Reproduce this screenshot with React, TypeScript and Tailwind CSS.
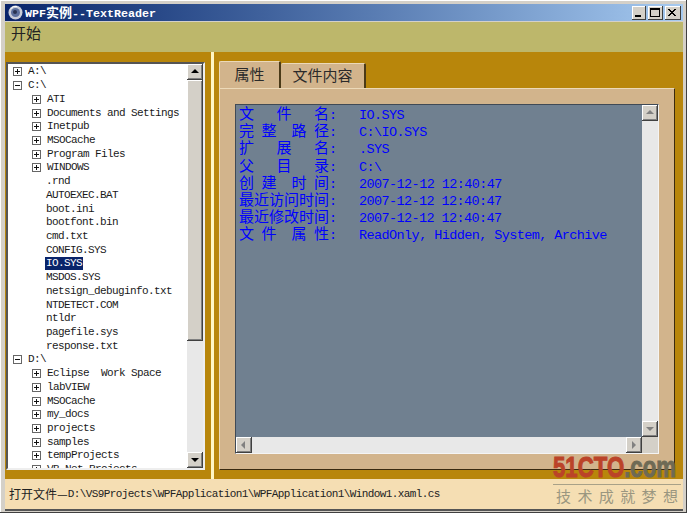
import React from "react";

const CJK = /([\u4e00-\u9fff—]+)/;

function T({ text, cjk, latin }: { text: string; cjk: string; latin: string }) {
  return (
    <>
      {text.split(CJK).map((part, i) =>
        CJK.test(part) ? (
          <span key={i} className={cjk}>
            {part}
          </span>
        ) : (
          <span key={i} className={latin}>
            {part}
          </span>
        ),
      )}
    </>
  );
}

const mono = "font-['Liberation_Mono','DejaVu_Sans_Mono',monospace]";
const cn = "font-['Noto_Sans_CJK_SC',sans-serif]";

function Expander({ open }: { open?: boolean }) {
  return (
    <svg width="9" height="9" viewBox="0 0 9 9" className="shrink-0" shapeRendering="crispEdges">
      <rect x="0.5" y="0.5" width="8" height="8" fill="#fff" stroke="#666" />
      <path d={open ? "M2 4.5H7" : "M2 4.5H7M4.5 2V7"} stroke="#111" fill="none" />
    </svg>
  );
}

type Row = { label: string; level: 0 | 1 | 2; kind?: "open" | "closed"; selected?: boolean };

const rows: Row[] = [
  { label: "A:\\", level: 0, kind: "closed" },
  { label: "C:\\", level: 0, kind: "open" },
  { label: "ATI", level: 1, kind: "closed" },
  { label: "Documents and Settings", level: 1, kind: "closed" },
  { label: "Inetpub", level: 1, kind: "closed" },
  { label: "MSOCache", level: 1, kind: "closed" },
  { label: "Program Files", level: 1, kind: "closed" },
  { label: "WINDOWS", level: 1, kind: "closed" },
  { label: ".rnd", level: 2 },
  { label: "AUTOEXEC.BAT", level: 2 },
  { label: "boot.ini", level: 2 },
  { label: "bootfont.bin", level: 2 },
  { label: "cmd.txt", level: 2 },
  { label: "CONFIG.SYS", level: 2 },
  { label: "IO.SYS", level: 2, selected: true },
  { label: "MSDOS.SYS", level: 2 },
  { label: "netsign_debuginfo.txt", level: 2 },
  { label: "NTDETECT.COM", level: 2 },
  { label: "ntldr", level: 2 },
  { label: "pagefile.sys", level: 2 },
  { label: "response.txt", level: 2 },
  { label: "D:\\", level: 0, kind: "open" },
  { label: "Eclipse  Work Space", level: 1, kind: "closed" },
  { label: "labVIEW", level: 1, kind: "closed" },
  { label: "MSOCache", level: 1, kind: "closed" },
  { label: "my_docs", level: 1, kind: "closed" },
  { label: "projects", level: 1, kind: "closed" },
  { label: "samples", level: 1, kind: "closed" },
  { label: "tempProjects", level: 1, kind: "closed" },
  { label: "VB.Net Projects", level: 1, kind: "closed" },
];

const props = [
  "文   件   名:   IO.SYS",
  "完 整  路 径:   C:\\IO.SYS",
  "扩   展   名:   .SYS",
  "父   目   录:   C:\\",
  "创 建  时 间:   2007-12-12 12:40:47",
  "最近访问时间:   2007-12-12 12:40:47",
  "最近修改时间:   2007-12-12 12:40:47",
  "文 件  属 性:   ReadOnly, Hidden, System, Archive",
];

function Arrow({ dir, color }: { dir: "up" | "down" | "left" | "right"; color: string }) {
  const d = {
    up: "M4 1L8 5H0Z",
    down: "M0 2H8L4 6Z",
    left: "M5 0V8L1 4Z",
    right: "M2 0L6 4L2 8Z",
  }[dir];
  return (
    <svg width="8" height="8" viewBox="0 0 8 8">
      <path d={d} fill={color} />
    </svg>
  );
}

function ScrollBtn({ dir, color }: { dir: "up" | "down" | "left" | "right"; color: string }) {
  return (
    <div className="flex items-center justify-center w-4 h-4 shrink-0 bg-[#d4d0c8] shadow-[inset_-1px_-1px_0_#404040,inset_1px_1px_0_#ffffff,inset_-2px_-2px_0_#808080]">
      <Arrow dir={dir} color={color} />
    </div>
  );
}

function TreeRow({ row }: { row: Row }) {
  const box = row.level === 0 ? "pl-[5px] w-[19px]" : "pl-[24px] w-[38px]";
  return (
    <div className="flex items-center h-[13.73px] whitespace-pre shrink-0">
      {row.kind ? (
        <div className={`${box} shrink-0 flex`}>
          <Expander open={row.kind === "open"} />
        </div>
      ) : (
        <div className="w-[37px] shrink-0" />
      )}
      <span
        className={`${mono} text-[11px] tracking-[-0.6px] leading-[13px] px-px ${
          row.selected ? "bg-[#0a246a] text-white" : "text-[#1a1a1a]"
        }`}
      >
        {row.label}
      </span>
    </div>
  );
}

export default function App() {
  return (
    <div className="relative w-[687px] h-[513px] overflow-hidden flex flex-col bg-[#d4d0c8] pt-1 pl-[5px] pr-[4px] pb-[2px] shadow-[inset_-1px_-1px_0_#404040,inset_1px_1px_0_#ffffff]">
      {/* Title bar */}
      <div className="h-[17px] shrink-0 flex items-center bg-gradient-to-r from-[#0a246a] to-[#a6caf0] pl-[3px] pr-[2px]">
        <svg width="15" height="15" viewBox="0 0 15 15" className="shrink-0">
          <circle cx="7.5" cy="7.5" r="7" fill="#c8ccd8" />
          <circle cx="7.5" cy="7.5" r="4.5" fill="#5c6f9c" />
          <circle cx="7" cy="7" r="2" fill="#2a3350" />
          <path d="M2.5 4A6 6 0 0 1 9 1.5" stroke="#fff" fill="none" />
        </svg>
        <div className="ml-[2px] text-white font-bold whitespace-pre leading-[17px]">
          <T text="WPF实例--TextReader" cjk={`${cn} text-[13px]`} latin={`${mono} text-[11.67px]`} />
        </div>
        <div className="ml-auto flex items-center">
          <WinBtn width="w-[14px]">
            <path d="M3 9H9V11H3Z" fill="#000" />
          </WinBtn>
          <div className="w-[2px]" />
          <WinBtn width="w-[15px]">
            <path d="M2.5 2.5H11.5V10.5H2.5ZM2.5 3.5H11.5" stroke="#000" fill="none" shapeRendering="crispEdges" />
          </WinBtn>
          <div className="w-[2px]" />
          <WinBtn width="w-4">
            <path d="M3 3L10 10M4 3L11 10M10 3L3 10M11 3L4 10" stroke="#000" fill="none" />
          </WinBtn>
        </div>
      </div>

      {/* Menu */}
      <div className="mt-px h-[30px] shrink-0 bg-[#bdb76b] flex items-start pl-[6px]">
        <span className={`${cn} text-[15px] leading-[22px] text-[#222]`}>开始</span>
      </div>

      {/* Main */}
      <div className="flex-1 min-h-0 flex bg-[#b8860b]">
        {/* Left pane */}
        <div className="w-[206px] shrink-0 pt-[10px] pb-[9px] pl-px pr-[6px] flex">
          <div className="flex-1 min-w-0 flex border-2 border-t-[#555555] border-l-[#555555] border-r-[#eeeeee] border-b-[#eeeeee] bg-white">
            <div className="flex-1 min-w-0 overflow-hidden flex flex-col pt-px">
              {rows.map((r, i) => (
                <TreeRow key={i} row={r} />
              ))}
            </div>
            <div className="w-4 shrink-0 flex flex-col bg-[#e8e8e8]">
              <ScrollBtn dir="up" color="#000" />
              <div className="h-[261px] shrink-0 bg-[#d4d0c8] shadow-[inset_-1px_-1px_0_#404040,inset_1px_1px_0_#ffffff,inset_-2px_-2px_0_#808080]" />
              <div className="flex-1" />
              <ScrollBtn dir="down" color="#000" />
            </div>
          </div>
        </div>

        {/* Splitter */}
        <div className="w-[3px] shrink-0 bg-[#fff6c4]" />

        {/* Right pane */}
        <div className="flex-1 min-w-0 pt-[9px] pb-[9px] pl-[5px] pr-[8px] flex flex-col">
          <div className="flex items-end h-[27px] shrink-0 relative z-10">
            <div className="w-[62px] h-[27px] pb-px bg-[#d2b48c] border-l border-t border-[#ecd9b8] border-r-2 border-r-[#4a3a18] rounded-t-[2px] flex items-center justify-center">
              <span className={`${cn} text-[15px] text-[#2a2a2a]`}>属性</span>
            </div>
            <div className="w-[85px] h-[25px] pb-px bg-[#d2b48c] border-t border-[#ecd9b8] border-r-2 border-r-[#4a3a18] rounded-t-[2px] flex items-center justify-center">
              <span className={`${cn} text-[15px] text-[#2a2a2a]`}>文件内容</span>
            </div>
          </div>
          <div className="flex-1 min-h-0 flex bg-[#d2b48c] border border-t-[#ecd9b8] border-l-[#ecd9b8] border-r-[#3a2a10] border-b-[#3a2a10] p-[15px]">
            <div className="flex-1 min-w-0 grid grid-cols-[1fr_16px] grid-rows-[1fr_16px] border border-t-[#404a56] border-l-[#404a56] border-r-[#f4f4f4] border-b-[#f4f4f4] bg-[#708090]">
              <div className="min-h-0 overflow-hidden pl-[3px] text-[#0000ff]">
                {props.map((p, i) => (
                  <div key={i} className="flex items-baseline h-[17.2px] whitespace-pre">
                    <T
                      text={p}
                      cjk={`${cn} text-[15px] leading-[15px]`}
                      latin={`${mono} text-[13.5px] leading-[15px] tracking-[-0.6px]`}
                    />
                  </div>
                ))}
              </div>
              <div className="flex flex-col bg-[#e8e8e8]">
                <ScrollBtn dir="up" color="#808080" />
                <div className="flex-1" />
                <ScrollBtn dir="down" color="#808080" />
              </div>
              <div className="flex bg-[#e8e8e8]">
                <ScrollBtn dir="left" color="#808080" />
                <div className="flex-1" />
                <ScrollBtn dir="right" color="#808080" />
              </div>
              <div className="bg-[#d4d0c8]" />
            </div>
          </div>
        </div>
      </div>

      {/* Status bar */}
      <div className="h-[30px] shrink-0 bg-[#f5deb3] flex items-center pl-[4px] whitespace-pre text-[#222]">
        <T
          text="打开文件—D:\VS9Projects\WPFApplication1\WPFApplication1\Window1.xaml.cs"
          cjk={`${cn} text-[12px]`}
          latin={`${mono} text-[11px] tracking-[-0.6px]`}
        />
      </div>
      <div className="h-[2px] shrink-0 bg-[#555555]" />

      {/* Watermark */}
      <div className="absolute left-[553px] top-[451px] w-[128px] flex flex-col">
        <div className="h-[31px] flex items-end whitespace-pre font-['Liberation_Sans',sans-serif] font-bold text-[30px] leading-[31px] origin-left scale-x-[0.74] w-[175px]">
          <span className="text-[#bb4328] [-webkit-text-stroke:1px_#bb4328]">51CTO</span>
          <span className="text-[#6e6a55] [-webkit-text-stroke:1px_#6e6a55]">.com</span>
        </div>
        <div className="h-px bg-[#a8a188] mt-[2px]" />
        <div className={`${cn} flex justify-between px-[3px] text-[15px] leading-[22px] text-[#9a9680]`}>
          <span>技</span>
          <span>术</span>
          <span>成</span>
          <span>就</span>
          <span>梦</span>
          <span>想</span>
        </div>
      </div>
    </div>
  );
}

function WinBtn({ children, width }: { children: React.ReactNode; width: string }) {
  return (
    <div className={`${width} h-[14px] overflow-hidden bg-[#d4d0c8] shadow-[inset_-1px_-1px_0_#404040,inset_1px_1px_0_#ffffff]`}>
      <svg width="14" height="14" viewBox="0 0 14 14">
        {children}
      </svg>
    </div>
  );
}
